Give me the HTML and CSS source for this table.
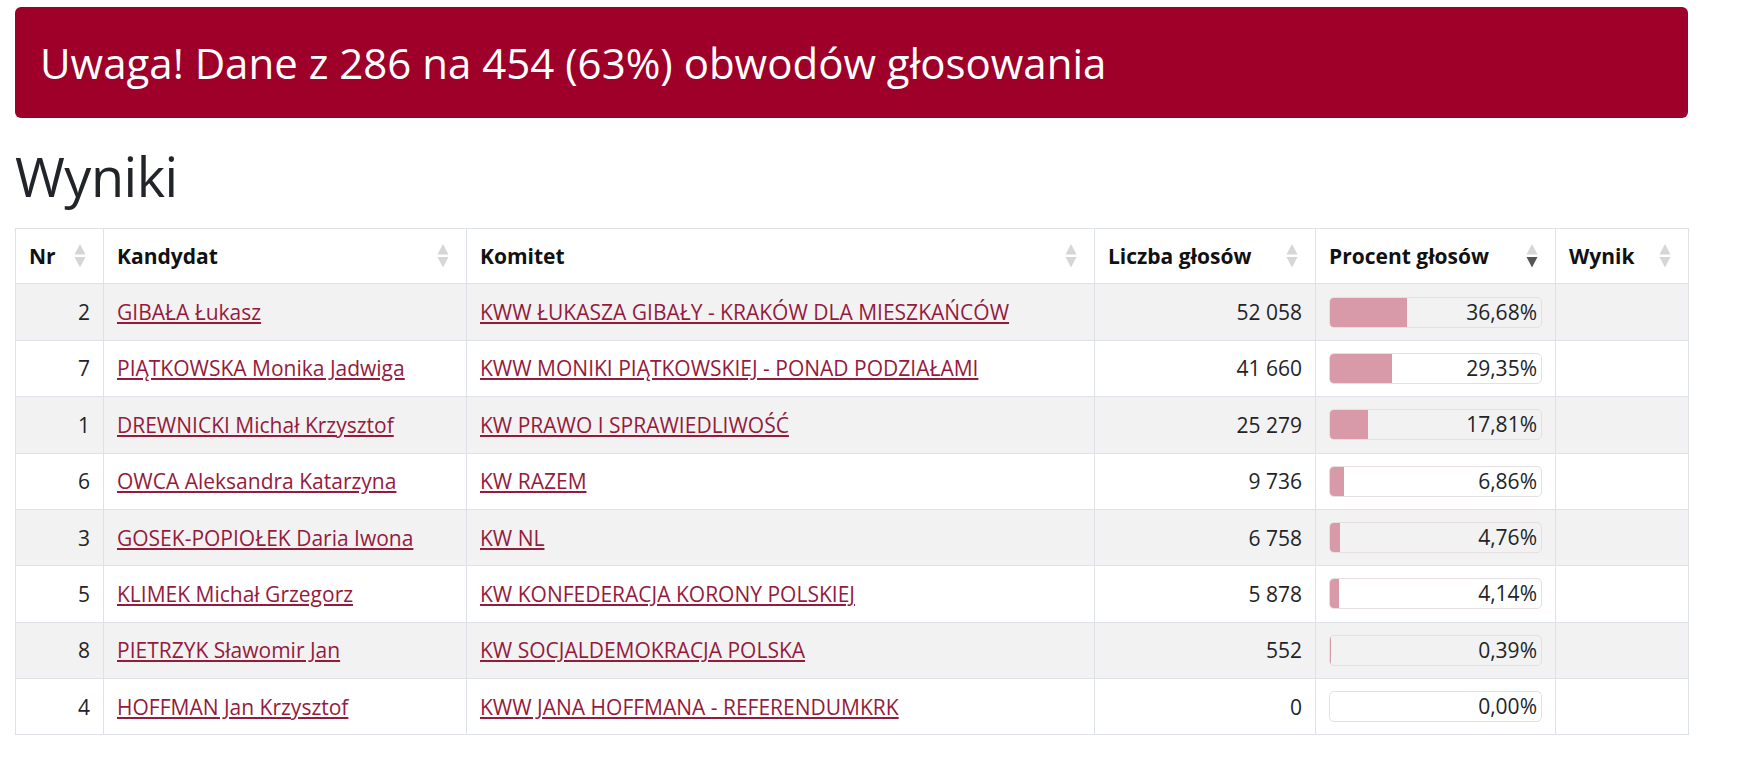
FILE: index.html
```html
<!DOCTYPE html>
<html lang="pl">
<head>
<meta charset="utf-8">
<title>Wyniki</title>
<link rel="stylesheet" href="styles.css">
</head>
<body>
<div class="page">
  <div class="alert">Uwaga! Dane z 286 na 454 (63%) obwodów głosowania</div>
  <h1 class="title">Wyniki</h1>
  <table class="results">
    <colgroup>
      <col class="c-nr"><col class="c-kand"><col class="c-kom"><col class="c-liczba"><col class="c-proc"><col class="c-wynik">
    </colgroup>
    <thead>
      <tr>
        <th><div class="th-in"><span>Nr</span><svg class="sort" viewBox="0 0 12 26"><path class="up" d="M6 1 L11.5 11.5 H0.5 Z"/><path class="down" d="M0.5 14 H11.5 L6 24.5 Z"/></svg></div></th>
        <th><div class="th-in"><span>Kandydat</span><svg class="sort" viewBox="0 0 12 26"><path class="up" d="M6 1 L11.5 11.5 H0.5 Z"/><path class="down" d="M0.5 14 H11.5 L6 24.5 Z"/></svg></div></th>
        <th><div class="th-in"><span>Komitet</span><svg class="sort" viewBox="0 0 12 26"><path class="up" d="M6 1 L11.5 11.5 H0.5 Z"/><path class="down" d="M0.5 14 H11.5 L6 24.5 Z"/></svg></div></th>
        <th><div class="th-in"><span>Liczba głosów</span><svg class="sort" viewBox="0 0 12 26"><path class="up" d="M6 1 L11.5 11.5 H0.5 Z"/><path class="down" d="M0.5 14 H11.5 L6 24.5 Z"/></svg></div></th>
        <th><div class="th-in"><span>Procent głosów</span><svg class="sort" viewBox="0 0 12 26"><path class="up" d="M6 1 L11.5 11.5 H0.5 Z"/><path class="down active" d="M0.5 14 H11.5 L6 24.5 Z"/></svg></div></th>
        <th><div class="th-in"><span>Wynik</span><svg class="sort" viewBox="0 0 12 26"><path class="up" d="M6 1 L11.5 11.5 H0.5 Z"/><path class="down" d="M0.5 14 H11.5 L6 24.5 Z"/></svg></div></th>
      </tr>
    </thead>
    <tbody>
      <tr>
        <td class="num">2</td>
        <td><a href="#">GIBAŁA Łukasz</a></td>
        <td><a href="#">KWW ŁUKASZA GIBAŁY - KRAKÓW DLA MIESZKAŃCÓW</a></td>
        <td class="num">52 058</td>
        <td><div class="bar"><div class="fill" style="width:36.68%"></div><div class="pct">36,68%</div></div></td>
        <td></td>
      </tr>
      <tr>
        <td class="num">7</td>
        <td><a href="#">PIĄTKOWSKA Monika Jadwiga</a></td>
        <td><a href="#">KWW MONIKI PIĄTKOWSKIEJ - PONAD PODZIAŁAMI</a></td>
        <td class="num">41 660</td>
        <td><div class="bar"><div class="fill" style="width:29.35%"></div><div class="pct">29,35%</div></div></td>
        <td></td>
      </tr>
      <tr>
        <td class="num">1</td>
        <td><a href="#">DREWNICKI Michał Krzysztof</a></td>
        <td><a href="#">KW PRAWO I SPRAWIEDLIWOŚĆ</a></td>
        <td class="num">25 279</td>
        <td><div class="bar"><div class="fill" style="width:17.81%"></div><div class="pct">17,81%</div></div></td>
        <td></td>
      </tr>
      <tr>
        <td class="num">6</td>
        <td><a href="#">OWCA Aleksandra Katarzyna</a></td>
        <td><a href="#">KW RAZEM</a></td>
        <td class="num">9 736</td>
        <td><div class="bar"><div class="fill" style="width:6.86%"></div><div class="pct">6,86%</div></div></td>
        <td></td>
      </tr>
      <tr>
        <td class="num">3</td>
        <td><a href="#">GOSEK-POPIOŁEK Daria Iwona</a></td>
        <td><a href="#">KW NL</a></td>
        <td class="num">6 758</td>
        <td><div class="bar"><div class="fill" style="width:4.76%"></div><div class="pct">4,76%</div></div></td>
        <td></td>
      </tr>
      <tr>
        <td class="num">5</td>
        <td><a href="#">KLIMEK Michał Grzegorz</a></td>
        <td><a href="#">KW KONFEDERACJA KORONY POLSKIEJ</a></td>
        <td class="num">5 878</td>
        <td><div class="bar"><div class="fill" style="width:4.14%"></div><div class="pct">4,14%</div></div></td>
        <td></td>
      </tr>
      <tr>
        <td class="num">8</td>
        <td><a href="#">PIETRZYK Sławomir Jan</a></td>
        <td><a href="#">KW SOCJALDEMOKRACJA POLSKA</a></td>
        <td class="num">552</td>
        <td><div class="bar"><div class="fill" style="width:0.39%"></div><div class="pct">0,39%</div></div></td>
        <td></td>
      </tr>
      <tr>
        <td class="num">4</td>
        <td><a href="#">HOFFMAN Jan Krzysztof</a></td>
        <td><a href="#">KWW JANA HOFFMANA - REFERENDUMKRK</a></td>
        <td class="num">0</td>
        <td><div class="bar"><div class="fill" style="width:0%"></div><div class="pct">0,00%</div></div></td>
        <td></td>
      </tr>
    </tbody>
  </table>
</div>
</body>
</html>
```
FILE: styles.css
```css
html, body {
  margin: 0;
  padding: 0;
  background: #fff;
}
body {
  font-family: "Open Sans", "Noto Sans", "Liberation Sans", sans-serif;
  font-size: 21px;
  color: #212529;
}
.page {
  width: 1673px;
  margin-left: 15px;
  padding-top: 7px;
}
.alert {
  background: #9e0029;
  color: #fff;
  border-radius: 6px;
  height: 111px;
  box-sizing: border-box;
  padding: 0 25px;
  display: flex;
  align-items: center;
  font-size: 42px;
  line-height: 50px;
}
.title {
  margin: 22px 0 0 0;
  font-weight: 400;
  font-size: 54px;
  line-height: 72px;
  color: #212529;
  letter-spacing: -0.5px;
}
.results {
  margin-top: 16px;
  width: 1673px;
  table-layout: fixed;
  border-collapse: collapse;
}
.c-nr { width: 88px; }
.c-kand { width: 363px; }
.c-kom { width: 628px; }
.c-liczba { width: 221px; }
.c-proc { width: 240px; }
.c-wynik { width: 133px; }
.results th,
.results td {
  border: 1px solid #dee2e6;
  padding: 12.2px 13px;
  line-height: 30px;
  vertical-align: middle;
}
.results th {
  text-align: left;
  font-weight: 700;
  color: #111;
}
.th-in {
  display: flex;
  align-items: center;
  justify-content: space-between;
}
.sort {
  width: 12px;
  height: 26px;
  margin-right: 4px;
  flex: none;
}
.sort path { fill: #d6d6d6; }
.sort path.active { fill: #555; }
.results tbody tr:nth-child(odd) td {
  background: #f2f2f2;
}
.results td.num {
  text-align: right;
}
.results a {
  color: #951b3d;
  text-decoration: underline;
  white-space: nowrap;
}
.bar {
  display: grid;
  height: 31px;
  box-sizing: border-box;
  border: 1px solid #e6dfe1;
  border-radius: 5px;
  overflow: hidden;
}
.fill {
  grid-area: 1 / 1;
  justify-self: start;
  height: 100%;
  background: #d899a9;
}
.pct {
  grid-area: 1 / 1;
  text-align: right;
  padding-right: 4px;
  line-height: 29px;
}
```
